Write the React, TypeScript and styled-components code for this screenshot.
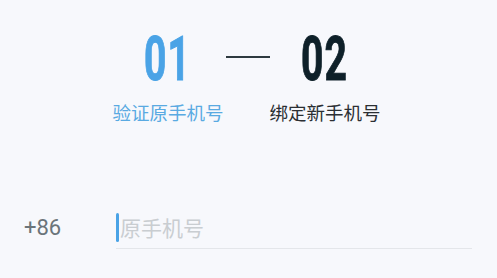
import React from "react";
import styled, { createGlobalStyle } from "styled-components";

const Global = createGlobalStyle`
  html, body { margin: 0; padding: 0; background: #f7f8fc; }
  body { font-family: "Noto Sans CJK SC", "Noto Sans", sans-serif; }
`;

const Page = styled.div`
  width: 497px;
  height: 278px;
  background: #f7f8fc;
  padding-top: 28px;
  box-sizing: border-box;
  overflow: hidden;
`;

const Steps = styled.div`
  display: flex;
  justify-content: center;
  align-items: flex-start;
  padding-right: 4px;
`;

const Step = styled.div`
  width: 110px;
  display: flex;
  flex-direction: column;
  align-items: center;
`;

const StepNumber = styled.div<{ $active?: boolean }>`
  font-family: Roboto, "Liberation Sans", sans-serif;
  font-weight: 700;
  font-size: 62px;
  line-height: 62px;
  height: 62px;
  letter-spacing: 2px;
  color: ${(p) => (p.$active ? "#4aa3e6" : "#0e2029")};
  transform: scaleX(0.63);
  -webkit-text-stroke: 1px currentColor;
`;

const StepLabel = styled.div<{ $active?: boolean }>`
  margin-top: 10px;
  font-size: 18.5px;
  line-height: 24px;
  color: ${(p) => (p.$active ? "#5aaae2" : "#2b2f33")};
  white-space: nowrap;
`;

const Dash = styled.div`
  width: 44px;
  height: 2px;
  background: #2e3a40;
  margin: 28px 0 0 3px;
`;

const InputRow = styled.div`
  display: flex;
  align-items: center;
  margin-top: 82px;
  padding: 0 25px 0 24px;
`;

const Prefix = styled.div`
  width: 92px;
  font-family: Roboto, "Liberation Sans", sans-serif;
  font-size: 22px;
  color: #6b747a;
`;

const Field = styled.div`
  flex: 1;
  height: 42px;
  display: flex;
  align-items: center;
  border-bottom: 1.5px solid #e4e6ea;
`;

const Caret = styled.span`
  width: 3px;
  height: 29px;
  border-radius: 2px;
  background: #4aa3e6;
  margin-right: 1px;
`;

const Placeholder = styled.span`
  font-size: 21px;
  color: #c9cdd1;
  line-height: 1;
`;

export default function App() {
  return (
    <Page>
      <Global />
      <Steps>
        <Step>
          <StepNumber $active>01</StepNumber>
          <StepLabel $active>验证原手机号</StepLabel>
        </Step>
        <Dash />
        <Step>
          <StepNumber>02</StepNumber>
          <StepLabel>绑定新手机号</StepLabel>
        </Step>
      </Steps>
      <InputRow>
        <Prefix>+86</Prefix>
        <Field>
          <Caret />
          <Placeholder>原手机号</Placeholder>
        </Field>
      </InputRow>
    </Page>
  );
}
